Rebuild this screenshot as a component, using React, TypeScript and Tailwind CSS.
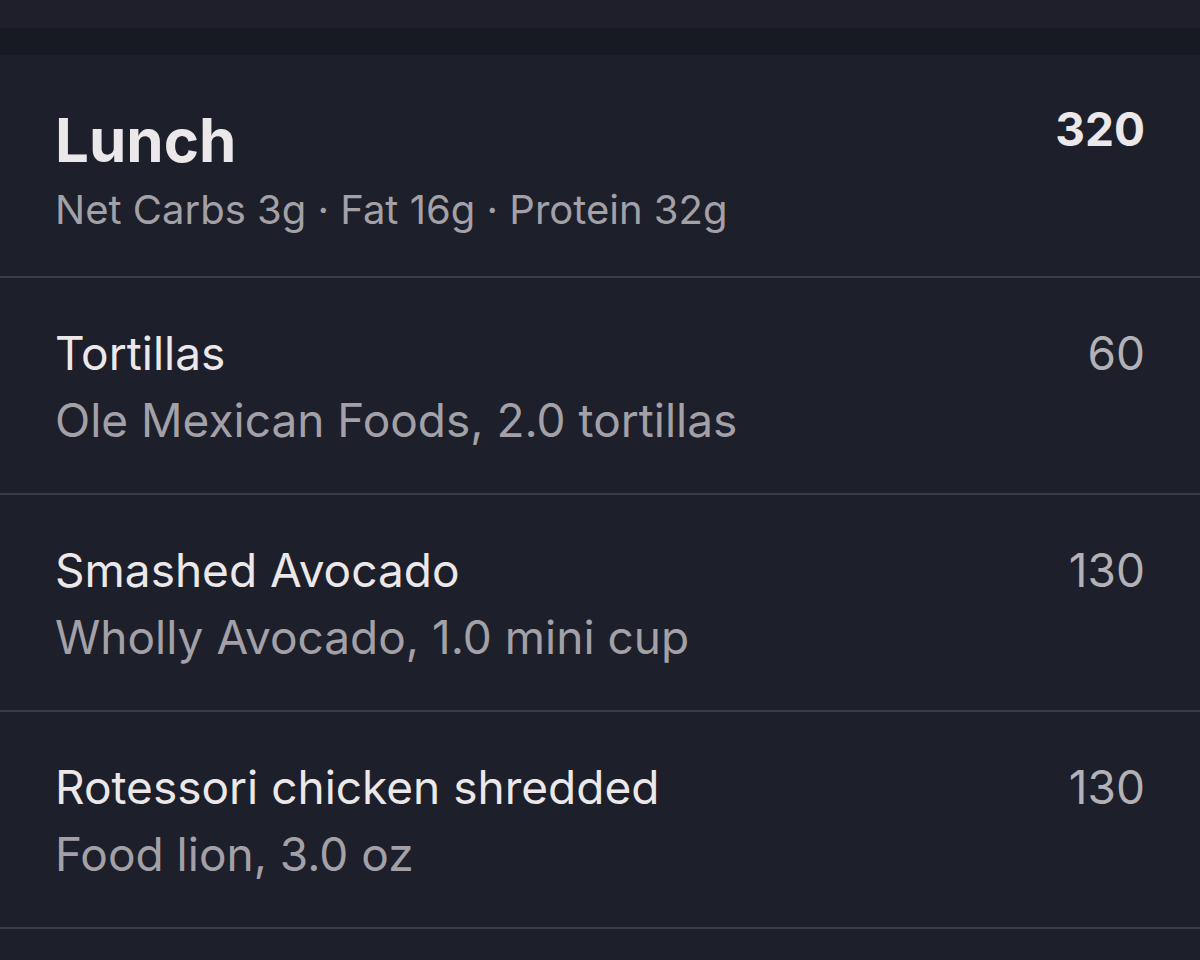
import React from "react";

const items = [
  { name: "Tortillas", detail: "Ole Mexican Foods, 2.0 tortillas", kcal: "60" },
  { name: "Smashed Avocado", detail: "Wholly Avocado, 1.0 mini cup", kcal: "130" },
  { name: "Rotessori chicken shredded", detail: "Food lion, 3.0 oz", kcal: "130" },
];

export default function App() {
  return (
    <div
      className="w-[1200px] h-[960px] overflow-hidden bg-[#1d1f2b] flex flex-col"
      style={{ fontFamily: "Inter, 'Noto Sans', sans-serif" }}
    >
      <div className="h-[28px] bg-[#1e1f2b]" />
      <div className="h-[27px] bg-[#171923]" />
      <div className="h-[221px] px-[55px] pt-[46px] flex justify-between items-start">
        <div className="flex flex-col">
          <div className="text-[60px] leading-[73px] mt-[3px] font-bold text-[#ece8ea]">Lunch</div>
          <div className="text-[40px] leading-[48px] mt-[9px] text-[#a3a1a7]">
            Net Carbs 3g · Fat 16g · Protein 32g
          </div>
        </div>
        <div className="text-[46px] leading-[56px] font-bold text-[#ece8ea]">320</div>
      </div>
      {items.map((it) => (
        <div key={it.name} className="flex flex-col">
          <div className="h-[2px] bg-[#3a3c49]" />
          <div className="h-[215px] px-[55px] pt-[47px] flex justify-between items-start">
            <div className="flex flex-col">
              <div className="text-[46px] leading-[56px] text-[#ece8ea]">{it.name}</div>
              <div className="text-[46px] leading-[56px] mt-[11px] text-[#a3a1a7]">{it.detail}</div>
            </div>
            <div className="text-[46px] leading-[56px] text-[#b3b1b6]">{it.kcal}</div>
          </div>
        </div>
      ))}
      <div className="h-[2px] bg-[#3a3c49]" />
    </div>
  );
}
